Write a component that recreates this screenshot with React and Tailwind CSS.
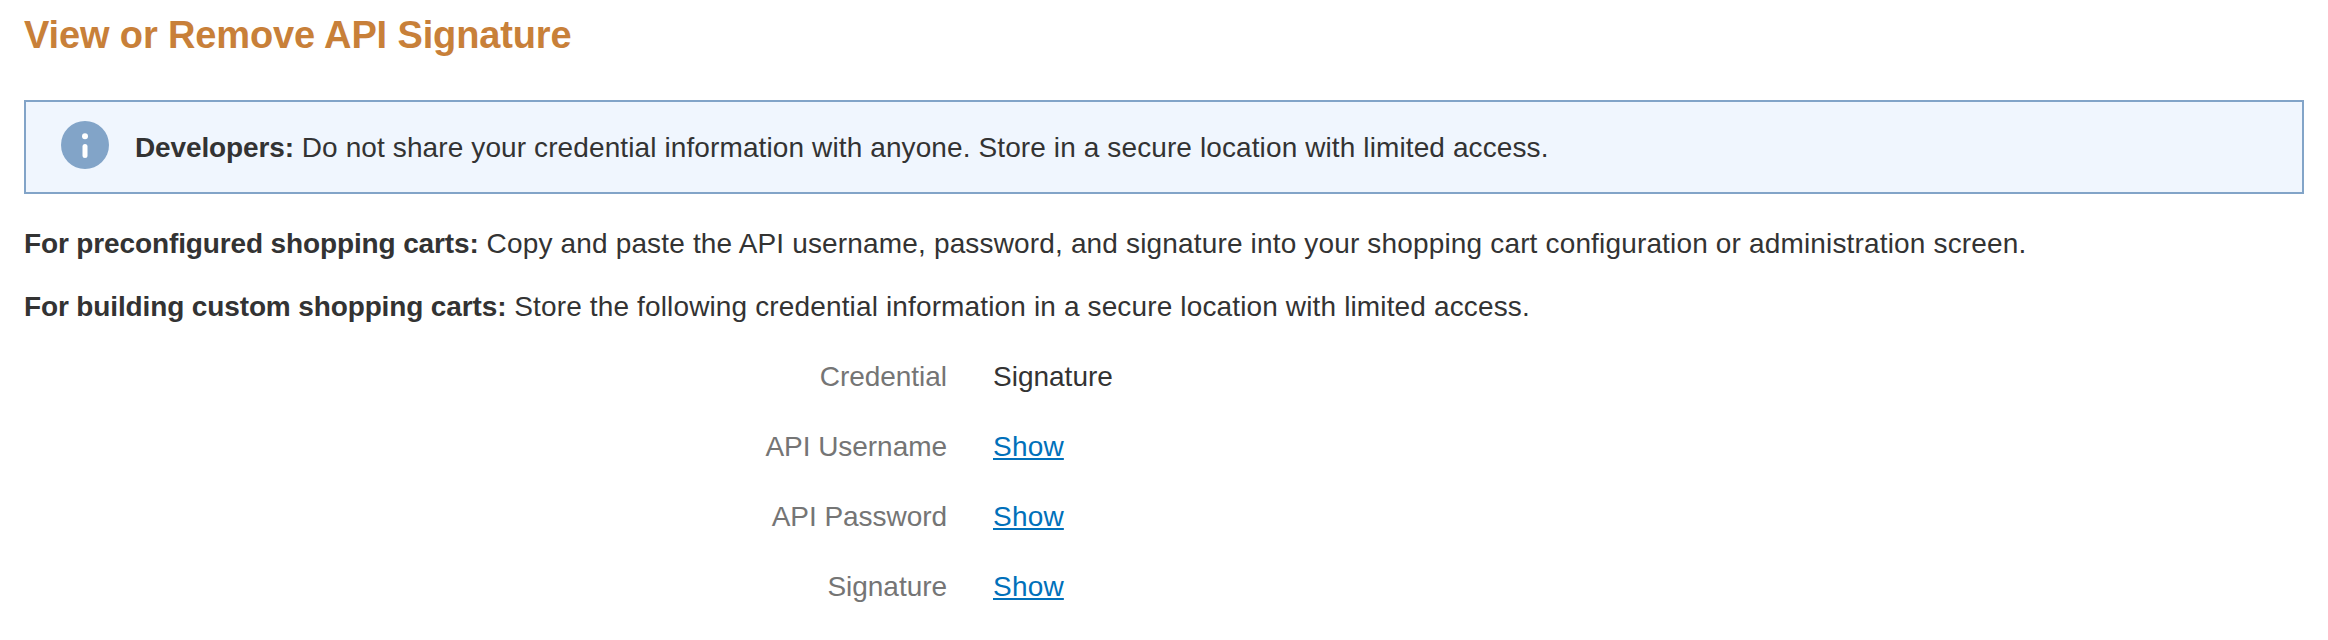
const credentials = [
  { label: "Credential", value: "Signature" },
  { label: "API Username", link: true },
  { label: "API Password", link: true },
  { label: "Signature", link: true },
]

const InfoIcon = () => (
  <svg className="mb-[5px] h-12 w-12 shrink-0" viewBox="0 0 48 48" aria-hidden="true">
    <circle cx="24" cy="24" r="24" fill="#82a4c8" />
    <circle cx="24" cy="15.3" r="3" fill="#fff" />
    <path d="M24 25.5v9" stroke="#fff" strokeWidth="5" strokeLinecap="round" />
  </svg>
)

const Lead = ({ children }) => <b className="tracking-[-0.13px]">{children}</b>

const App = () => {
  return (
    <div className="h-[640px] bg-white px-6 pt-3 font-['Liberation_Sans',Arial,sans-serif] text-[28px] leading-[42px] text-[#333]">
      <h1 className="text-[38px] font-bold leading-[46px] tracking-[-0.13px] text-[#c88039]">
        View or Remove API Signature
      </h1>
      <div className="mt-[42px] flex h-[94px] items-center border-2 border-[#82a4c8] bg-[#f0f6fe] pl-[35px]">
        <InfoIcon />
        <p className="ml-[26px] pt-0.5 tracking-[0.11px]">
          <Lead>Developers:</Lead> Do not share your credential information with anyone. Store in a secure location with
          limited access.
        </p>
      </div>
      <p className="mt-[29px] tracking-[0.16px]">
        <Lead>For preconfigured shopping carts:</Lead> Copy and paste the API username, password, and signature into
        your shopping cart configuration or administration screen.
      </p>
      <p className="mt-[21px] tracking-[0.14px]">
        <Lead>For building custom shopping carts:</Lead> Store the following credential information in a secure location
        with limited access.
      </p>
      <dl className="mt-[28px] grid grid-cols-[923px_1fr] gap-x-[46px] gap-y-[28px]">
        {credentials.map(({ label, value, link }) => (
          <div key={label} className="contents">
            <dt className="text-right tracking-[-0.04px] text-[#757575]">{label}</dt>
            <dd>
              {link ? (
                <a href="#" className="tracking-[0.2px] text-[#0070ba] underline decoration-2 underline-offset-2">
                  Show
                </a>
              ) : (
                value
              )}
            </dd>
          </div>
        ))}
      </dl>
    </div>
  )
}

export default App
